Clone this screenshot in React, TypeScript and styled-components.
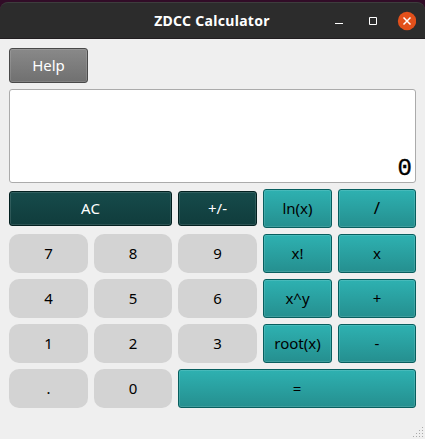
import React from "react";
import styled, { createGlobalStyle, css } from "styled-components";

const GlobalStyle = createGlobalStyle`
  * { box-sizing: border-box; }
  body { margin: 0; background: #300a24; overflow: hidden; }
`;

const Window = styled.main`
  width: 425px;
  height: 439px;
  padding-top: 2px;
  background: #310c27;
  font-family: "Noto Sans", "Open Sans", sans-serif;
  display: flex;
  flex-direction: column;
`;

const TitleBar = styled.header`
  height: 37px;
  flex: none;
  display: grid;
  grid-template-columns: 100px 1fr 100px;
  align-items: center;
  padding-right: 9px;
  background: #2c2c2c;
  border-top: 1px solid #3d3d3d;
  border-bottom: 1px solid #211d20;
  border-radius: 8px 8px 0 0;
`;

const Title = styled.h1`
  grid-column: 2;
  margin: 0;
  padding-left: 8px;
  text-align: center;
  white-space: nowrap;
  color: #fff;
  font-size: 14px;
  line-height: 20px;
  font-weight: 700;
  letter-spacing: 0.3px;
`;

const Controls = styled.div`
  display: flex;
  justify-content: flex-end;
`;

const ControlIcon = styled.svg`
  display: block;
  flex: none;
`;

const Body = styled.section`
  flex: 1;
  padding: 9px 9px 0;
  background: #efefef;
  display: flex;
  flex-direction: column;
`;

const Display = styled.output`
  flex: none;
  height: 94px;
  margin: 6px 0;
  padding: 0 3px 0 0;
  display: flex;
  align-items: flex-end;
  justify-content: flex-end;
  background: #fff;
  border: 1px solid #ababab;
  border-radius: 3px;
  color: #000;
  font-family: "Liberation Mono", monospace;
  font-size: 24px;
  line-height: 26px;
  -webkit-text-stroke: 0.4px #000;
`;

const Keypad = styled.div`
  display: grid;
  grid-template-columns: 79px 78px 79px 69px 78px;
  grid-auto-rows: 39px;
  gap: 6px;
  align-items: center;
`;

type Kind = "digit" | "operator" | "dark" | "grey";

const skins = {
  digit: css`
    background: #d3d3d3;
    border: 0;
    border-radius: 10px;
  `,
  operator: css`
    background: linear-gradient(#2eb1b1, #258f8f);
    border: 1px solid #075e5e;
    box-shadow: inset 0 0 0 1px rgba(255, 255, 255, 0.12);
  `,
  dark: css`
    height: 35px;
    color: #fff;
    background: linear-gradient(#164b4b, #103c3c);
    border: 1px solid #032020;
    box-shadow: inset 0 0 0 1px rgba(255, 255, 255, 0.12);
  `,
  grey: css`
    width: 79px;
    height: 35px;
    flex: none;
    color: #fff;
    background: linear-gradient(#898989, #707070);
    border: 1px solid #494949;
    box-shadow: inset 0 0 0 1px rgba(255, 255, 255, 0.12);
  `,
};

const Key = styled.button<{ $kind: Kind; $span?: number }>`
  height: 39px;
  padding: 0 0 2px;
  border-radius: 3px;
  color: #000;
  font: 15px/20px "Noto Sans", "Open Sans", sans-serif;
  white-space: nowrap;
  grid-column: span ${(p) => p.$span ?? 1};
  ${(p) => skins[p.$kind]}
`;

const Label = styled.span<{ $size?: number }>`
  font-size: ${(p) => p.$size ?? 15}px;
`;

const Grip = styled.svg`
  display: block;
  align-self: flex-end;
  margin: auto -7px 2px 0;
`;

interface KeySpec {
  label: string;
  kind: Kind;
  span?: number;
  size?: number;
}

const keys: KeySpec[] = [
  { label: "AC", kind: "dark", span: 2 },
  { label: "+/-", kind: "dark" },
  { label: "ln(x)", kind: "operator" },
  { label: "/", kind: "operator", size: 17 },
  { label: "7", kind: "digit" },
  { label: "8", kind: "digit" },
  { label: "9", kind: "digit" },
  { label: "x!", kind: "operator" },
  { label: "x", kind: "operator" },
  { label: "4", kind: "digit" },
  { label: "5", kind: "digit" },
  { label: "6", kind: "digit" },
  { label: "x^y", kind: "operator" },
  { label: "+", kind: "operator" },
  { label: "1", kind: "digit" },
  { label: "2", kind: "digit" },
  { label: "3", kind: "digit" },
  { label: "root(x)", kind: "operator" },
  { label: "-", kind: "operator" },
  { label: ".", kind: "digit" },
  { label: "0", kind: "digit" },
  { label: "=", kind: "operator", span: 3 },
];

const gripDots = [0, 1, 2, 3].flatMap((row) =>
  Array.from({ length: row + 1 }, (_, i) => ({ x: 9 - i * 3, y: row * 3 })),
);

export default function App() {
  return (
    <>
      <GlobalStyle />
      <Window>
        <TitleBar>
          <Title>ZDCC Calculator</Title>
          <Controls>
            <ControlIcon width="82" height="20" viewBox="0 0 82 20">
              <path d="M1 12.5h8" stroke="#fff" />
              <path d="M35.5 6.5h7v7h-7z" fill="none" stroke="#fff" />
              <circle cx="73" cy="10" r="9.2" fill="#e2501b" />
              <path d="M69.5 6.5l7 7m0-7l-7 7" stroke="#fff" strokeWidth="1.5" />
            </ControlIcon>
          </Controls>
        </TitleBar>
        <Body>
          <Key $kind="grey">
            <Label>Help</Label>
          </Key>
          <Display>0</Display>
          <Keypad>
            {keys.map((k) => (
              <Key key={k.label} $kind={k.kind} $span={k.span}>
                <Label $size={k.size}>{k.label}</Label>
              </Key>
            ))}
          </Keypad>
          <Grip width="10" height="10" viewBox="0 0 10 10">
            {gripDots.map((d) => (
              <rect key={`${d.x}-${d.y}`} x={d.x} y={d.y} width="1" height="1" fill="#a9a9a9" />
            ))}
          </Grip>
        </Body>
      </Window>
    </>
  );
}
